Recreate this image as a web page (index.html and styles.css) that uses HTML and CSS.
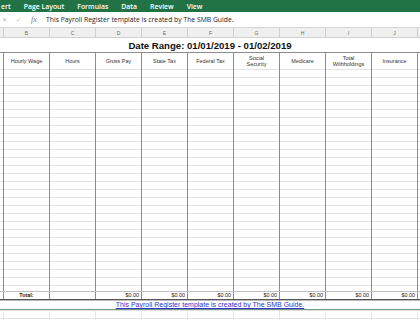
FILE: index.html
```
<!DOCTYPE html>
<html lang="en">

<head>
    <title>Payroll Register</title>
    <link rel="stylesheet" href="styles.css">
</head>

<body>
    <div class="ribbon">
        <span class="tab">ert</span>
        <span class="tab">Page Layout</span>
        <span class="tab">Formulas</span>
        <span class="tab">Data</span>
        <span class="tab">Review</span>
        <span class="tab">View</span>
    </div>

    <div class="fbar">
        <span class="ic">&#x2715;</span>
        <span class="ic">&#x2713;</span>
        <span class="fx">fx</span>
        <span class="formula">This Payroll Register template is created by The SMB Guide.</span>
    </div>

    <div class="grid letters">
        <div></div>
        <div>B</div>
        <div>C</div>
        <div>D</div>
        <div>E</div>
        <div>F</div>
        <div>G</div>
        <div>H</div>
        <div>I</div>
        <div>J</div>
        <div></div>
    </div>

    <div class="title">Date Range: 01/01/2019 - 01/02/2019</div>

    <div class="grid heads">
        <div></div>
        <div>Hourly Wage</div>
        <div>Hours</div>
        <div>Gross Pay</div>
        <div>State Tax</div>
        <div>Federal Tax</div>
        <div>Social<br>Security</div>
        <div>Medicare</div>
        <div>Total<br>Withholdings</div>
        <div>Insurance</div>
        <div></div>
    </div>

    <div class="grid body">
        <div></div><div></div><div></div><div></div><div></div><div></div>
        <div></div><div></div><div></div><div></div><div></div>
    </div>

    <div class="grid totals">
        <div></div>
        <div class="label">Total:</div>
        <div></div>
        <div>$0.00</div>
        <div>$0.00</div>
        <div>$0.00</div>
        <div>$0.00</div>
        <div>$0.00</div>
        <div>$0.00</div>
        <div>$0.00</div>
        <div></div>
    </div>

    <div class="credit"><a href="#">This Payroll Register template is created by The SMB Guide.</a></div>

    <div class="grid rest">
        <div></div><div></div><div></div><div></div><div></div><div></div>
        <div></div><div></div><div></div><div></div><div></div>
    </div>
</body>

</html>
```

FILE: styles.css
```
body {
    margin: 0;
    background: #fff;
    font-family: "Liberation Sans", Arial, sans-serif;
    overflow: hidden;
}

.ribbon {
    height: 12px;
    background: #217346;
    display: flex;
    align-items: center;
    gap: 13px;
    padding-left: 1px;
    color: #fff;
    font-family: "Open Sans", sans-serif;
    font-weight: 600;
    font-size: 6.9px;
    white-space: nowrap;
}

.fbar {
    height: 15px;
    border-bottom: 1px solid #d4d4d4;
    display: flex;
    align-items: center;
    font-family: "Open Sans", sans-serif;
    font-size: 6.8px;
    color: #222;

    .ic {
        color: #b5b5b5;
        font-size: 6px;
        margin-left: 2px;
        width: 12px;
    }

    .fx {
        font-family: "Liberation Serif", serif;
        font-style: italic;
        font-size: 8px;
        color: #777;
        margin-left: 3px;
        width: 15px;
    }
}

.grid {
    display: grid;
    grid-template-columns: 3px repeat(9, 45px) 1fr;
    column-gap: 1px;
}

.letters {
    height: 9px;
    background: #cfcfcf;
    border-bottom: 1px solid #d0d0d0;
    font-size: 5px;
    color: #666;

    & div {
        background: #efefef;
        display: flex;
        align-items: center;
        justify-content: center;
    }
}

.title {
    height: 14px;
    display: flex;
    align-items: center;
    justify-content: center;
    font-weight: bold;
    font-size: 9.6px;
    color: #111;
}

.heads {
    height: 16px;
    background: #8c8c8c;
    border-top: 1px solid #8c8c8c;
    font-size: 5.5px;
    color: #333;

    & div {
        background: #fff;
        display: flex;
        align-items: center;
        justify-content: center;
        text-align: center;
        line-height: 6.5px;
    }
}

.body,
.rest {
    background: #8c8c8c;

    & div {
        background: repeating-linear-gradient(#e2e2e2 0 1px, #fff 1px 8px);
    }
}

.body {
    height: 222px;
}

.totals {
    height: 7px;
    background: #8c8c8c;
    border-top: 1px solid #c0c0c0;
    border-bottom: 1px solid #555;
    font-size: 5.4px;
    color: #222;

    & div {
        background: #fff;
        text-align: right;
        padding-right: 2px;
        line-height: 7px;
    }

    .label {
        text-align: center;
        font-weight: bold;
        padding: 0;
    }
}

.credit {
    height: 8px;
    border-top: 1px solid #bbb;
    border-bottom: 1px solid #6f9b7f;
    text-align: center;
    font-size: 7px;
    line-height: 8px;

    & a {
        color: #3333cc;
    }
}

.rest {
    height: 20px;
    background: #e6e6e6;
}
```
